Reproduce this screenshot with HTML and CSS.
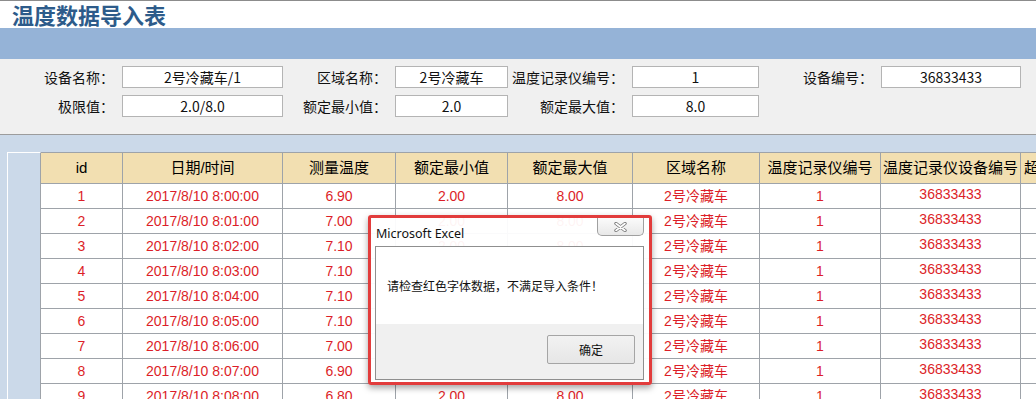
FILE: index.html
```html
<!DOCTYPE html>
<html lang="zh-CN">
<head>
  <meta charset="UTF-8" />
  <title>温度数据导入表</title>
  <link rel="stylesheet" href="styles.css">
</head>
<body>

<div class="title">温度数据导入表</div>
<div class="band"></div>

<div class="form">
  <div class="lbl">设备名称：</div><div class="box">2号冷藏车/1</div>
  <div class="lbl">区域名称：</div><div class="box">2号冷藏车</div>
  <div class="lbl">温度记录仪编号：</div><div class="box">1</div>
  <div class="lbl">设备编号：</div><div class="box">36833433</div>
  <div class="lbl">极限值：</div><div class="box">2.0/8.0</div>
  <div class="lbl">额定最小值：</div><div class="box">2.0</div>
  <div class="lbl">额定最大值：</div><div class="box">8.0</div>
</div>

<div class="sheet">
  <div class="grid">
    <div class="cell head sel"></div>
    <div class="cell head">id</div>
    <div class="cell head">日期/时间</div>
    <div class="cell head">测量温度</div>
    <div class="cell head">额定最小值</div>
    <div class="cell head">额定最大值</div>
    <div class="cell head">区域名称</div>
    <div class="cell head">温度记录仪编号</div>
    <div class="cell head">温度记录仪设备编号</div>
    <div class="cell head last">超限报警</div>

    <div class="cell sel"></div><div class="cell">1</div><div class="cell">2017/8/10 8:00:00</div><div class="cell">6.90</div><div class="cell">2.00</div><div class="cell">8.00</div><div class="cell">2号冷藏车</div><div class="cell">1</div><div class="cell dev">36833433</div><div class="cell"></div>
    <div class="cell sel"></div><div class="cell">2</div><div class="cell">2017/8/10 8:01:00</div><div class="cell">7.00</div><div class="cell">2.00</div><div class="cell">8.00</div><div class="cell">2号冷藏车</div><div class="cell">1</div><div class="cell dev">36833433</div><div class="cell"></div>
    <div class="cell sel"></div><div class="cell">3</div><div class="cell">2017/8/10 8:02:00</div><div class="cell">7.10</div><div class="cell">2.00</div><div class="cell">8.00</div><div class="cell">2号冷藏车</div><div class="cell">1</div><div class="cell dev">36833433</div><div class="cell"></div>
    <div class="cell sel"></div><div class="cell">4</div><div class="cell">2017/8/10 8:03:00</div><div class="cell">7.10</div><div class="cell">2.00</div><div class="cell">8.00</div><div class="cell">2号冷藏车</div><div class="cell">1</div><div class="cell dev">36833433</div><div class="cell"></div>
    <div class="cell sel"></div><div class="cell">5</div><div class="cell">2017/8/10 8:04:00</div><div class="cell">7.10</div><div class="cell">2.00</div><div class="cell">8.00</div><div class="cell">2号冷藏车</div><div class="cell">1</div><div class="cell dev">36833433</div><div class="cell"></div>
    <div class="cell sel"></div><div class="cell">6</div><div class="cell">2017/8/10 8:05:00</div><div class="cell">7.10</div><div class="cell">2.00</div><div class="cell">8.00</div><div class="cell">2号冷藏车</div><div class="cell">1</div><div class="cell dev">36833433</div><div class="cell"></div>
    <div class="cell sel"></div><div class="cell">7</div><div class="cell">2017/8/10 8:06:00</div><div class="cell">7.00</div><div class="cell">2.00</div><div class="cell">8.00</div><div class="cell">2号冷藏车</div><div class="cell">1</div><div class="cell dev">36833433</div><div class="cell"></div>
    <div class="cell sel"></div><div class="cell">8</div><div class="cell">2017/8/10 8:07:00</div><div class="cell">6.90</div><div class="cell">2.00</div><div class="cell">8.00</div><div class="cell">2号冷藏车</div><div class="cell">1</div><div class="cell dev">36833433</div><div class="cell"></div>
    <div class="cell sel"></div><div class="cell">9</div><div class="cell">2017/8/10 8:08:00</div><div class="cell">6.80</div><div class="cell">2.00</div><div class="cell">8.00</div><div class="cell">2号冷藏车</div><div class="cell">1</div><div class="cell dev">36833433</div><div class="cell"></div>
  </div>
</div>

<div class="msgbox">
  <div class="msgbox-title">
    <span>Microsoft Excel</span>
    <div class="close">
      <svg width="13" height="10" viewBox="0 0 13 10">
        <path d="M2 1.5 L11 8.5 M11 1.5 L2 8.5" stroke="#7a7a7a" stroke-width="3.4" stroke-linecap="round" fill="none"/>
        <path d="M2 1.5 L11 8.5 M11 1.5 L2 8.5" stroke="#fff" stroke-width="1.6" stroke-linecap="round" fill="none"/>
      </svg>
    </div>
  </div>
  <div class="msgbox-body">
    <div class="msgbox-text">请检查红色字体数据，不满足导入条件！</div>
    <div class="msgbox-foot">
      <button class="btn">确定</button>
    </div>
  </div>
</div>

</body>
</html>
```

FILE: styles.css
```css
body {
  margin: 0;
  width: 1036px;
  height: 399px;
  overflow: hidden;
  position: relative;
  background: #cbd9e9;
  font-family: "Liberation Sans", "Noto Sans CJK SC", sans-serif;
}

.title {
  height: 27px;
  background: #fff;
  border-top: 1px solid #8c8c8c;
  padding-left: 12px;
  font: bold 22px/27px "Noto Sans CJK SC", sans-serif;
  color: #2d5b8a;
}

.band {
  height: 31px;
  background: #95b3d7;
}

.form {
  display: grid;
  grid-template-columns: 122px 161px 112px 113px 124px 127px 122px 140px;
  grid-auto-rows: 22px;
  row-gap: 7px;
  padding: 7px 0 17px;
  background: #f0f0f0;
  border-bottom: 1px solid #9c9c9c;
  font-family: "Noto Sans CJK SC", sans-serif;
  font-size: 14px;
}

.lbl {
  text-align: right;
  padding-right: 8px;
  line-height: 22px;
  white-space: nowrap;
  color: #111;
}

.box {
  box-sizing: border-box;
  background: #fff;
  border: 1px solid #b4b4b4;
  text-align: center;
  line-height: 20px;
  color: #111;
}

.sheet {
  padding: 17px 0 0 7px;
}

.grid {
  display: grid;
  grid-template-columns: 34px 82px 160px 113px 112px 125px 127px 121px 140px 130px;
  width: max-content;
}

.cell {
  box-sizing: border-box;
  height: 25px;
  border-right: 1px solid #9ea3a9;
  border-bottom: 1px solid #9ea3a9;
  background: #fff;
  color: #dc1e28;
  text-align: center;
  font-size: 14px;
  line-height: 25px;
  white-space: nowrap;
  overflow: hidden;
}

.cell.head {
  height: 32px;
  background: #f2dfb1;
  border-top: 1px solid #9ea3a9;
  color: #000;
  font-size: 15px;
  line-height: 30px;
}

.cell.head.last {
  text-align: left;
  padding-left: 3px;
}

.cell.dev {
  line-height: 20px;
}

.cell.sel {
  background: #cbd9e9;
  border-left: 1px solid #fff;
  border-bottom: none;
}

.cell.head.sel {
  border-top-color: #fff;
}

.msgbox {
  position: absolute;
  left: 368px;
  top: 215px;
  width: 284px;
  height: 170px;
  box-sizing: border-box;
  display: flex;
  flex-direction: column;
  padding: 0 5px 2px 4px;
  border: 3px solid #e23c3c;
  border-radius: 3px;
  background: rgba(255, 255, 255, 0.95);
  box-shadow: 0 3px 6px rgba(0, 0, 0, 0.35);
  font-family: "Noto Sans CJK SC", sans-serif;
  font-size: 12px;
}

.msgbox-title {
  height: 28px;
  display: flex;
  justify-content: space-between;
  align-items: flex-start;
}

.msgbox-title span {
  padding: 7px 0 0 1px;
  font-family: "Noto Sans", sans-serif;
  font-size: 12.5px;
  color: #111;
}

.close {
  width: 47px;
  height: 18px;
  box-sizing: border-box;
  border: 1px solid #a0a0a0;
  border-top: none;
  border-radius: 0 0 5px 5px;
  background: linear-gradient(#fbfbfb, #e8e8e8);
  display: flex;
  align-items: center;
  justify-content: center;
}

.msgbox-body {
  flex-grow: 1;
  display: flex;
  flex-direction: column;
  border: 1px solid #8f8f8f;
  background: #fff;
}

.msgbox-text {
  flex-grow: 1;
  display: flex;
  align-items: center;
  padding-left: 11px;
  color: #111;
}

.msgbox-foot {
  height: 55px;
  box-sizing: border-box;
  display: flex;
  justify-content: flex-end;
  align-items: flex-start;
  padding: 11px 8px 0;
  background: #f0f0f0;
}

.btn {
  width: 88px;
  height: 29px;
  border: 1px solid #a5a5a5;
  border-radius: 2px;
  background: linear-gradient(#f2f2f2, #e6e6e6);
  font-family: "Noto Sans CJK SC", sans-serif;
  font-size: 12px;
  color: #111;
}
```
